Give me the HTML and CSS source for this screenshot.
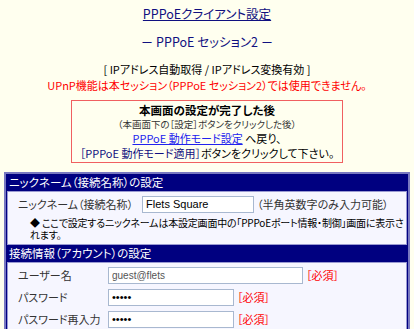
FILE: index.html
```
<!DOCTYPE html>
<html lang="ja">
<head>
    <meta charset="UTF-8">
    <title>PPPoEクライアント設定</title>
    <link rel="stylesheet" href="styles.css">
</head>
<body>
    <div class="page">
        <h1 class="title"><a href="#">PPPoEクライアント設定</a></h1>
        <h2 class="session">－ PPPoE セッション2 －</h2>

        <div class="mode">[ IPアドレス自動取得 / IPアドレス変換有効 ]</div>
        <div class="warn">UPnP機能は本セッション（PPPoE セッション2）では使用できません。</div>

        <div class="notice">
            <div class="notice-head">本画面の設定が完了した後</div>
            <div class="notice-sub">（本画面下の［設定］ボタンをクリックした後）</div>
            <div><a href="#" class="link">PPPoE 動作モード設定</a> へ戻り、</div>
            <div><span class="btn-name">［PPPoE 動作モード適用］</span>ボタンをクリックして下さい。</div>
        </div>

        <div class="panel">
            <div class="panel-head">ニックネーム（接続名称）の設定</div>
            <div class="panel-body">
                <div class="row">
                    <span class="label nick-label">ニックネーム（接続名称）</span>
                    <input type="text" class="field nick" value="Flets Square">
                    <span class="hint">（半角英数字のみ入力可能）</span>
                </div>
                <div class="note">◆ ここで設定するニックネームは本設定画面中の「PPPoEポート情報・制御」画面に表示されます。</div>
            </div>

            <div class="panel-head">接続情報（アカウント）の設定</div>
            <div class="panel-body account">
                <div class="row">
                    <span class="label">ユーザー名</span>
                    <input type="text" class="field user" value="guest@flets">
                    <span class="req">［必須］</span>
                </div>
                <div class="row">
                    <span class="label">パスワード</span>
                    <input type="password" class="field pass" value="abcde">
                    <span class="req">［必須］</span>
                </div>
                <div class="row">
                    <span class="label">パスワード再入力</span>
                    <input type="password" class="field pass" value="abcde">
                    <span class="req">［必須］</span>
                </div>
            </div>
        </div>
    </div>
</body>
</html>
```
FILE: styles.css
```
body {
    margin: 0;
    background: #ffffef;
    color: #000;
    font-family: "Noto Sans CJK JP", sans-serif;
    font-size: 11px;
    font-feature-settings: "palt";
}

.page {
    padding: 0 4px;
}

.title {
    margin: 0;
    padding-top: 5px;
    text-align: center;
    font-size: 12.5px;
    font-weight: normal;
    line-height: 18px;
}

.title a {
    color: #101080;
}

.session {
    margin: 10px 0 0;
    text-align: center;
    font-size: 12.5px;
    font-weight: normal;
    color: #101080;
    line-height: 18px;
}

.mode {
    margin-top: 10px;
    text-align: center;
    line-height: 16px;
}

.warn {
    text-align: center;
    color: #ff0000;
    line-height: 16px;
}

.notice {
    width: 270px;
    margin: 7px auto 0;
    border: 1px solid #f06060;
    text-align: center;
    line-height: 15px;
    padding: 2px 0 1px;
}

.notice-head {
    font-weight: bold;
    font-size: 11.5px;
}

.notice-sub {
    font-size: 9.5px;
    color: #333;
    line-height: 13px;
}

.link {
    color: #2222ee;
}

.btn-name {
    color: #101080;
}

.panel {
    margin-top: 9px;
    border: 2px solid #7878c0;
    background: #000080;
}

.panel-head {
    background: #000080;
    color: #fff;
    line-height: 17px;
    padding: 0 3px;
    font-size: 11.5px;
}

.panel-body {
    background: #f6f6ff;
    border: 1px solid #9a9ad2;
    margin: 0 1px;
    padding: 2px 2px 3px 10px;
}

.row {
    display: flex;
    align-items: center;
    gap: 3px;
    height: 20px;
}

.label {
    color: #333;
    width: 87px;
    flex: none;
}

.nick-label {
    width: auto;
    margin-right: 6px;
}

.field {
    box-sizing: border-box;
    height: 17px;
    margin: 0;
    border: 1px solid #a8b8d0;
    background: #fff;
    font-family: "Liberation Sans", sans-serif;
    font-size: 11px;
    padding: 0 3px;
}

.nick {
    width: 112px;
}

.user {
    width: 195px;
    color: #555;
    font-size: 10px;
}

.pass {
    width: 126px;
}

.hint {
    color: #333;
}

.note {
    font-size: 10px;
    letter-spacing: -0.2px;
    line-height: 12px;
    padding-left: 12px;
    padding-top: 3px;
}

.account {
    padding-top: 1px;
}

.account .row {
    height: 22px;
}

.req {
    color: #ff0000;
}
```
